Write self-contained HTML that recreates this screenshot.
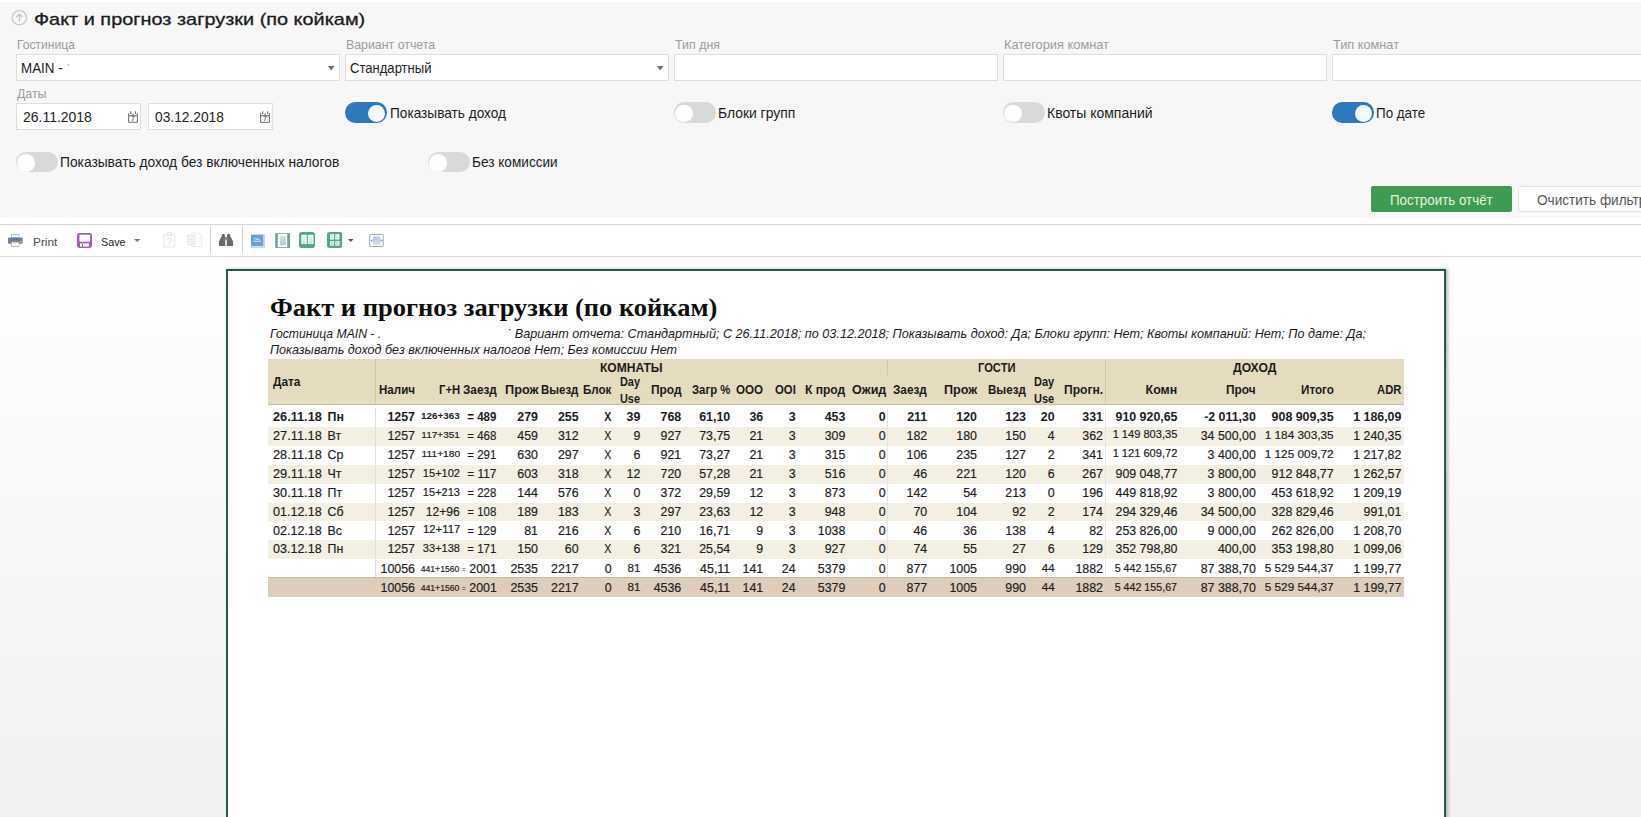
<!DOCTYPE html>
<html lang="ru"><head><meta charset="utf-8"><title>Факт и прогноз загрузки (по койкам)</title>
<style>
html,body{margin:0;padding:0;}
body{width:1641px;height:817px;overflow:hidden;background:#fff;position:relative;font-family:"Liberation Sans", "DejaVu Sans", sans-serif;color:#222;}
.b{position:absolute;display:block;}
.t{position:absolute;white-space:nowrap;line-height:1;display:inline-block;}
.sf{font-family:"Liberation Serif","DejaVu Serif",serif;}
</style></head>
<body>
<div class="b" style="left:0.00px;top:2.00px;width:1641.00px;height:216.00px;background:#f7f7f7;"></div>
<svg class="b" style="left:11px;top:9px" width="17" height="17" viewBox="0 0 17 17"><circle cx="8.4" cy="8.7" r="7.1" fill="none" stroke="#c9c9c9" stroke-width="1.3"/><path d="M8.4 12.6V5.2M5.3 8.2l3.1-3.1 3.1 3.1" fill="none" stroke="#c4c4c4" stroke-width="1.3"/></svg>
<div class="b" style="left:16.00px;top:54.00px;width:324.00px;height:27.00px;background:#fff;border:1px solid #dedede;box-sizing:border-box;"></div>
<div class="b" style="left:345.00px;top:54.00px;width:324.00px;height:27.00px;background:#fff;border:1px solid #dedede;box-sizing:border-box;"></div>
<div class="b" style="left:674.00px;top:54.00px;width:324.00px;height:27.00px;background:#fff;border:1px solid #dedede;box-sizing:border-box;"></div>
<div class="b" style="left:1003.00px;top:54.00px;width:324.00px;height:27.00px;background:#fff;border:1px solid #dedede;box-sizing:border-box;"></div>
<div class="b" style="left:1332.00px;top:54.00px;width:324.00px;height:27.00px;background:#fff;border:1px solid #dedede;box-sizing:border-box;"></div>
<svg class="b" style="left:328.3px;top:65.6px" width="7" height="5" viewBox="0 0 7 5"><path d="M0 0h6.4L3.2 4.4z" fill="#6e6e6e"/></svg>
<svg class="b" style="left:657.3px;top:65.6px" width="7" height="5" viewBox="0 0 7 5"><path d="M0 0h6.4L3.2 4.4z" fill="#6e6e6e"/></svg>
<div class="b" style="left:16.00px;top:103.00px;width:125.00px;height:27.00px;background:#fff;border:1px solid #dedede;box-sizing:border-box;"></div>
<svg class="b" style="left:128.1px;top:111px" width="10" height="12" viewBox="0 0 10 12"><path d="M.6 2.1v9.2h8.8V2.1" fill="#fff" stroke="#6e6e6e" stroke-width="1"/><path d="M.6 4.7h8.8" stroke="#6e6e6e" stroke-width="1"/><path d="M2.7.2v2.9M7.6.2v2.9" stroke="#6e6e6e" stroke-width="1.1"/><path d="M4.4 2.4h1.3v1.9H4.4z" fill="#777"/><text x="5" y="10.4" font-size="6.4" font-weight="700" text-anchor="middle" fill="#6e6e6e" font-family="Liberation Sans, DejaVu Sans, sans-serif">7</text></svg>
<div class="b" style="left:148.00px;top:103.00px;width:125.00px;height:27.00px;background:#fff;border:1px solid #dedede;box-sizing:border-box;"></div>
<svg class="b" style="left:260.1px;top:111px" width="10" height="12" viewBox="0 0 10 12"><path d="M.6 2.1v9.2h8.8V2.1" fill="#fff" stroke="#6e6e6e" stroke-width="1"/><path d="M.6 4.7h8.8" stroke="#6e6e6e" stroke-width="1"/><path d="M2.7.2v2.9M7.6.2v2.9" stroke="#6e6e6e" stroke-width="1.1"/><path d="M4.4 2.4h1.3v1.9H4.4z" fill="#777"/><text x="5" y="10.4" font-size="6.4" font-weight="700" text-anchor="middle" fill="#6e6e6e" font-family="Liberation Sans, DejaVu Sans, sans-serif">7</text></svg>
<div class="b" style="left:345.0px;top:102.2px;width:41.6px;height:20.6px;border-radius:10.3px;background:#2d78be;"></div>
<div class="b" style="left:367.6px;top:104.8px;width:17.6px;height:17.6px;border-radius:50%;background:#f6f9fc;"></div>
<div class="b" style="left:674.0px;top:102.2px;width:41.6px;height:20.4px;border-radius:10.2px;background:#d9d9d9;"></div>
<div class="b" style="left:675.3px;top:104.5px;width:17.6px;height:17.6px;border-radius:50%;background:#fdfdfd;"></div>
<div class="b" style="left:1003.0px;top:102.2px;width:41.6px;height:20.4px;border-radius:10.2px;background:#d9d9d9;"></div>
<div class="b" style="left:1004.3px;top:104.5px;width:17.6px;height:17.6px;border-radius:50%;background:#fdfdfd;"></div>
<div class="b" style="left:1332.0px;top:102.2px;width:41.6px;height:20.6px;border-radius:10.3px;background:#2d78be;"></div>
<div class="b" style="left:1354.6px;top:104.8px;width:17.6px;height:17.6px;border-radius:50%;background:#f6f9fc;"></div>
<div class="b" style="left:16.0px;top:151.7px;width:41.6px;height:20.4px;border-radius:10.2px;background:#d9d9d9;"></div>
<div class="b" style="left:17.3px;top:154.0px;width:17.6px;height:17.6px;border-radius:50%;background:#fdfdfd;"></div>
<div class="b" style="left:428.0px;top:151.7px;width:41.6px;height:20.4px;border-radius:10.2px;background:#d9d9d9;"></div>
<div class="b" style="left:429.3px;top:154.0px;width:17.6px;height:17.6px;border-radius:50%;background:#fdfdfd;"></div>
<div class="b" style="left:1371.00px;top:186.00px;width:141.00px;height:26.00px;background:#3f9a54;border-radius:2px;"></div>
<div class="b" style="left:1518.00px;top:186.00px;width:140.00px;height:26.00px;background:#fff;border:1px solid #e2e2e2;border-radius:2px;box-sizing:border-box;"></div>
<div class="b" style="left:0.00px;top:224.00px;width:1641.00px;height:1.00px;background:#d6d6d6;"></div>
<div class="b" style="left:0.00px;top:256.00px;width:1641.00px;height:1.00px;background:#dedede;"></div>
<div class="b" style="left:210.00px;top:227.00px;width:1.00px;height:26.00px;background:#d0d0d0;"></div>
<div class="b" style="left:242.00px;top:227.00px;width:1.00px;height:26.00px;background:#d0d0d0;"></div>
<!-- printer -->
<svg class="b" style="left:8px;top:234px" width="15" height="13" viewBox="0 0 15 13">
<rect x="3.4" y="0.4" width="7.6" height="3.6" fill="#fff" stroke="#a3abb4" stroke-width=".7"/>
<rect x="0" y="3.4" width="14.7" height="6.4" rx="1.1" fill="#74808d"/>
<rect x="3" y="4.3" width="8.4" height="1.5" fill="#4d7ab0"/>
<rect x="3.4" y="8.1" width="7.6" height="4.4" fill="#fff" stroke="#a0a7af" stroke-width=".7"/>
<path d="M4.8 9.8h3.6" stroke="#d2d6db" stroke-width=".8"/>
<rect x="12.2" y="7.4" width="1.6" height=".9" fill="#e8ebee"/>
</svg>
<!-- save -->
<svg class="b" style="left:77px;top:233px" width="15" height="15" viewBox="0 0 15 15">
<rect x="0" y="0.1" width="15" height="14.8" rx="2.4" fill="#9b5fb5"/>
<rect x="2.5" y="1.7" width="10.6" height="7" rx=".5" fill="#fff"/>
<rect x="3.1" y="10.4" width="8.8" height="3.3" fill="#fff"/>
<rect x="4.9" y="10.9" width="1.1" height="2.8" fill="#9b5fb5"/>
</svg>
<svg class="b" style="left:134px;top:239px" width="7" height="4" viewBox="0 0 7 4"><path d="M0 0h6.4L3.2 3z" fill="#777"/></svg>
<!-- paste (disabled) -->
<svg class="b" style="left:163px;top:232px" width="13" height="16" viewBox="0 0 13 16">
<rect x=".8" y="2.4" width="11" height="12.6" fill="#fbfbfb" stroke="#e3e6ea" stroke-width="1"/>
<rect x="4" y=".6" width="4.6" height="2.8" fill="#f2f3f5" stroke="#dfe2e6" stroke-width=".8"/>
<text x="6.4" y="12.2" font-size="8.5" text-anchor="middle" fill="#dcdfe3" font-family="Liberation Sans, sans-serif">?</text>
</svg>
<!-- copy (disabled) -->
<svg class="b" style="left:187px;top:232px" width="16" height="16" viewBox="0 0 16 16">
<path d="M4.6 1h7.2l3 3v10.6H4.6z" fill="#fcfcfc" stroke="#e4e6e9" stroke-width=".9"/>
<rect x=".8" y="3.6" width="6.6" height="8.6" fill="#fafafa" stroke="#dcdfe3" stroke-width=".9"/>
<path d="M2.2 6h3.8M2.2 7.8h3.8M2.2 9.6h3.8" stroke="#d5d8dc" stroke-width=".8"/>
</svg>
<!-- binoculars -->
<svg class="b" style="left:219px;top:233.8px" width="14" height="12" viewBox="0 0 14 12">
<path d="M3.2 0h2.3l.5 2.2.3 9.8H0V7.2L2.7 2.2z" fill="#6a6a6a"/>
<path d="M8.5 0h2.3l.5 2.2L14 7.2V12H7.7l.3-9.8z" fill="#6a6a6a"/>
<rect x="5.6" y="3" width="2.8" height="3.2" fill="#8d8d8d"/>
</svg>
<!-- icon1 blue -->
<svg class="b" style="left:250px;top:234px" width="15" height="14" viewBox="0 0 15 14">
<rect x=".3" y=".3" width="14.4" height="13.2" fill="#f2f5fa"/>
<path d="M14.4.2v13.2H.4" fill="none" stroke="#a9b1c2" stroke-width=".6"/>
<rect x="1" y=".6" width="12.4" height="11.6" fill="#6c9fd7"/>
<path d="M3.4 4.7h3v.7h3.2M3.4 7.4h7.6" fill="none" stroke="#b9d6f3" stroke-width="1.1"/>
</svg>
<!-- icon2 green frame -->
<svg class="b" style="left:275px;top:233px" width="15.4" height="15" viewBox="0 0 15.4 15">
<defs><linearGradient id="g2" x1="0" y1="0" x2="0" y2="1"><stop offset="0" stop-color="#dfe5ee"/><stop offset="1" stop-color="#b3c3d8"/></linearGradient></defs>
<rect x=".2" y=".1" width="14.9" height="14.8" fill="#6aa68f"/>
<rect x="2.8" y=".8" width="9.4" height="13.3" fill="#fff"/>
<rect x="4.8" y="2.6" width="6.2" height="9.6" fill="url(#g2)"/>
</svg>
<!-- icon3 two pages -->
<svg class="b" style="left:299px;top:232px" width="16" height="16" viewBox="0 0 16 16">
<rect x="0" y="0" width="16" height="16" rx="2.8" fill="#58a48a"/>
<rect x="2.2" y="2.8" width="5.7" height="9.2" fill="#e6f8f5"/>
<rect x="8.9" y="2.8" width="5.7" height="9.2" fill="#e6f8f5"/>
<path d="M3.6 5.4h2.8M3.6 7.2h2.8M3.6 9h2.8M10.3 5.4h2.8M10.3 7.2h2.8M10.3 9h2.8" stroke="#c2dcdc" stroke-width=".7"/>
<path d="M3.8 10.6h2.4M10.5 10.6h2.4" stroke="#8fb9b4" stroke-width=".8"/>
</svg>
<!-- icon4 four pages -->
<svg class="b" style="left:326.9px;top:232px" width="15.4" height="16" viewBox="0 0 15.4 16">
<rect x="0" y="0" width="15.4" height="16" rx="2.8" fill="#58a48a"/>
<rect x="3.1" y="2.1" width="3.9" height="5.5" fill="#e6f8f5"/>
<rect x="8.2" y="2.1" width="4.3" height="5.5" fill="#e6f8f5"/>
<rect x="3.1" y="9.1" width="3.9" height="4.6" fill="#e6f8f5"/>
<rect x="8.2" y="9.1" width="4.3" height="4.6" fill="#e6f8f5"/>
<path d="M4 3.6h2M4 5.4h2M9.3 3.6h2M9.3 5.4h2" stroke="#bcd8d6" stroke-width=".7"/>
<path d="M4 10.6h2M4 12.2h2M9.3 10.6h2M9.3 12.2h2" stroke="#8fb9b4" stroke-width=".7"/>
</svg>
<svg class="b" style="left:348.2px;top:239px" width="6" height="4" viewBox="0 0 6 4"><path d="M0 0h5.6L2.8 2.9z" fill="#555"/></svg>
<!-- icon5 full width -->
<svg class="b" style="left:369px;top:234px" width="15" height="13" viewBox="0 0 15 13">
<defs><linearGradient id="g5" x1="0" y1="0" x2="0" y2="1"><stop offset="0" stop-color="#b7c8e4"/><stop offset="1" stop-color="#d3deef"/></linearGradient></defs>
<rect x=".7" y=".5" width="13.6" height="12" rx="1.1" fill="#fff" stroke="#9c9ea3" stroke-width=".9"/>
<rect x="3.9" y="2.5" width="7.6" height="8.3" fill="url(#g5)"/>
<path d="M1.4 6.6l2-1.6v3.2zM13.8 6.6l-2-1.6v3.2z" fill="#7c9ccb"/>
</svg>

<div class="b" style="left:0.00px;top:257.00px;width:1641.00px;height:560.00px;background:linear-gradient(to bottom,#ffffff 0%,#f1f1f1 100%);"></div>
<div class="b" style="left:226.00px;top:269.00px;width:1220.00px;height:600.00px;border:2px solid #28574f;box-sizing:border-box;background:#fff;box-shadow:2px 0 3px rgba(0,0,0,.28);"></div>
<div class="b" style="left:268.00px;top:359.00px;width:1136.00px;height:45.50px;background:#e5dcc0;border-bottom:1px solid #c9c0a4;box-sizing:border-box;"></div>
<div class="b" style="left:268.00px;top:427.20px;width:1136.00px;height:18.80px;background:#f3f0e3;"></div>
<div class="b" style="left:268.00px;top:464.90px;width:1136.00px;height:18.80px;background:#f3f0e3;"></div>
<div class="b" style="left:268.00px;top:502.60px;width:1136.00px;height:18.80px;background:#f3f0e3;"></div>
<div class="b" style="left:268.00px;top:540.20px;width:1136.00px;height:18.80px;background:#f3f0e3;"></div>
<div class="b" style="left:268.00px;top:577.30px;width:1136.00px;height:19.50px;background:#decdba;border-top:1px solid #c9b8a2;box-sizing:border-box;"></div>
<div class="b" style="left:375.00px;top:359.00px;width:1.00px;height:45.00px;background:#cfc6aa;"></div>
<div class="b" style="left:375.00px;top:408.00px;width:1.00px;height:169.00px;background:#dedede;"></div>
<div class="b" style="left:887.00px;top:359.00px;width:1.00px;height:16.00px;background:#cfc6aa;"></div>
<div class="b" style="left:887.00px;top:408.00px;width:1.00px;height:169.00px;background:#e4e4e4;"></div>
<div class="b" style="left:1105.00px;top:359.00px;width:1.00px;height:45.00px;background:#cfc6aa;"></div>
<div class="b" style="left:1105.00px;top:408.00px;width:1.00px;height:169.00px;background:#e4e4e4;"></div>
<span class="t" id="t1" style="top:11.02px;font-size:17.00px;color:#1a1a1a;-webkit-text-stroke:0.30px #1a1a1a;left:33.60px;transform-origin:0 50%;transform:scaleX(1.1698);">Факт и прогноз загрузки (по койкам)</span>
<span class="t" id="t2" style="top:38.02px;font-size:13.00px;color:#9b9b9b;left:17.00px;transform-origin:0 50%;transform:scaleX(0.9320);">Гостиница</span>
<span class="t" id="t3" style="top:38.02px;font-size:13.00px;color:#9b9b9b;left:346.00px;transform-origin:0 50%;transform:scaleX(0.9500);">Вариант отчета</span>
<span class="t" id="t4" style="top:38.02px;font-size:13.00px;color:#9b9b9b;left:675.00px;transform-origin:0 50%;transform:scaleX(0.9555);">Тип дня</span>
<span class="t" id="t5" style="top:38.02px;font-size:13.00px;color:#9b9b9b;left:1004.00px;transform-origin:0 50%;transform:scaleX(0.9862);">Категория комнат</span>
<span class="t" id="t6" style="top:38.02px;font-size:13.00px;color:#9b9b9b;left:1333.00px;transform-origin:0 50%;transform:scaleX(0.9796);">Тип комнат</span>
<span class="t" id="t7" style="top:60.77px;font-size:14.50px;left:21.40px;transform-origin:0 50%;transform:scaleX(0.9222);">MAIN -</span>
<span class="t" id="t8" style="top:62.52px;font-size:8.00px;color:#666;left:67.60px;transform-origin:0 50%;">&#x27;</span>
<span class="t" id="t9" style="top:60.77px;font-size:14.50px;left:350.00px;transform-origin:0 50%;transform:scaleX(0.9009);">Стандартный</span>
<span class="t" id="t10" style="top:87.02px;font-size:13.00px;color:#9b9b9b;left:17.00px;transform-origin:0 50%;transform:scaleX(0.9502);">Даты</span>
<span class="t" id="t11" style="top:109.77px;font-size:14.50px;left:22.60px;transform-origin:0 50%;transform:scaleX(0.9636);">26.11.2018</span>
<span class="t" id="t12" style="top:109.77px;font-size:14.50px;left:154.60px;transform-origin:0 50%;transform:scaleX(0.9493);">03.12.2018</span>
<span class="t" id="t13" style="top:105.77px;font-size:14.50px;color:#1c1c1c;left:389.50px;transform-origin:0 50%;transform:scaleX(0.9408);">Показывать доход</span>
<span class="t" id="t14" style="top:105.77px;font-size:14.50px;color:#1c1c1c;left:718.30px;transform-origin:0 50%;transform:scaleX(0.9571);">Блоки групп</span>
<span class="t" id="t15" style="top:105.77px;font-size:14.50px;color:#1c1c1c;left:1047.00px;transform-origin:0 50%;transform:scaleX(0.9635);">Квоты компаний</span>
<span class="t" id="t16" style="top:105.77px;font-size:14.50px;color:#1c1c1c;left:1376.30px;transform-origin:0 50%;transform:scaleX(0.9237);">По дате</span>
<span class="t" id="t17" style="top:154.77px;font-size:14.50px;color:#1c1c1c;left:60.30px;transform-origin:0 50%;transform:scaleX(0.9499);">Показывать доход без включенных налогов</span>
<span class="t" id="t18" style="top:154.77px;font-size:14.50px;color:#1c1c1c;left:471.80px;transform-origin:0 50%;transform:scaleX(0.9389);">Без комиссии</span>
<span class="t" id="t19" style="top:192.77px;font-size:14.50px;color:#e6f6df;left:1390.00px;transform-origin:0 50%;transform:scaleX(0.9212);">Построить отчёт</span>
<span class="t" id="t20" style="top:192.77px;font-size:14.50px;color:#555;left:1536.60px;transform-origin:0 50%;transform:scaleX(0.9369);">Очистить фильтр</span>
<span class="t" id="t21" style="top:237.42px;font-size:11.20px;color:#4a4a4a;left:32.60px;transform-origin:0 50%;transform:scaleX(1.0601);">Print</span>
<span class="t" id="t22" style="top:237.42px;font-size:11.20px;left:101.00px;transform-origin:0 50%;transform:scaleX(0.9647);">Save</span>
<span class="t sf" id="t23" style="top:294.52px;font-size:26.00px;font-weight:700;color:#0c0c0c;left:270.00px;transform-origin:0 50%;transform:scaleX(1.0184);">Факт и прогноз загрузки (по койкам)</span>
<span class="t" id="t24" style="top:327.92px;font-size:12.20px;color:#1a1a1a;font-style:italic;left:270.00px;transform-origin:0 50%;">Гостиница MAIN - .</span>
<span class="t" id="t25" style="top:327.92px;font-size:12.20px;color:#1a1a1a;font-style:italic;left:507.00px;transform-origin:0 50%;transform:scaleX(1.0364);">˙ Вариант отчета: Стандартный; С 26.11.2018; по 03.12.2018; Показывать доход: Да; Блоки групп: Нет; Квоты компаний: Нет; По дате: Да;</span>
<span class="t" id="t26" style="top:343.92px;font-size:12.20px;color:#1a1a1a;font-style:italic;left:270.00px;transform-origin:0 50%;transform:scaleX(1.0322);">Показывать доход без включенных налогов Нет; Без комиссии Нет</span>
<span class="t" id="t27" style="top:375.82px;font-size:12.40px;font-weight:700;color:#1a1a1a;left:272.80px;transform-origin:0 50%;transform:scaleX(0.9551);">Дата</span>
<span class="t" id="t28" style="top:361.82px;font-size:12.40px;font-weight:700;color:#1a1a1a;left:600.30px;transform-origin:0 50%;transform:scaleX(0.9705);">КОМНАТЫ</span>
<span class="t" id="t29" style="top:361.82px;font-size:12.40px;font-weight:700;color:#1a1a1a;left:977.70px;transform-origin:0 50%;transform:scaleX(0.9009);">ГОСТИ</span>
<span class="t" id="t30" style="top:361.82px;font-size:12.40px;font-weight:700;color:#1a1a1a;left:1233.00px;transform-origin:0 50%;transform:scaleX(0.9785);">ДОХОД</span>
<span class="t" id="t31" style="top:383.82px;font-size:12.40px;font-weight:700;color:#1a1a1a;left:378.50px;transform-origin:0 50%;transform:scaleX(0.9343);">Налич</span>
<span class="t" id="t32" style="top:383.82px;font-size:12.40px;font-weight:700;color:#1a1a1a;left:439.00px;transform-origin:0 50%;transform:scaleX(0.9131);">Г+Н</span>
<span class="t" id="t33" style="top:383.82px;font-size:12.40px;font-weight:700;color:#1a1a1a;left:463.00px;transform-origin:0 50%;transform:scaleX(0.9500);">Заезд</span>
<span class="t" id="t34" style="top:383.82px;font-size:12.40px;font-weight:700;color:#1a1a1a;left:504.50px;transform-origin:0 50%;transform:scaleX(1.0253);">Прож</span>
<span class="t" id="t35" style="top:383.82px;font-size:12.40px;font-weight:700;color:#1a1a1a;left:541.00px;transform-origin:0 50%;transform:scaleX(0.9245);">Выезд</span>
<span class="t" id="t36" style="top:383.82px;font-size:12.40px;font-weight:700;color:#1a1a1a;left:583.00px;transform-origin:0 50%;transform:scaleX(0.9312);">Блок</span>
<span class="t" id="t37" style="top:375.82px;font-size:12.40px;font-weight:700;color:#1a1a1a;left:619.90px;transform-origin:0 50%;transform:scaleX(0.8797);">Day</span>
<span class="t" id="t38" style="top:392.82px;font-size:12.40px;font-weight:700;color:#1a1a1a;left:619.90px;transform-origin:0 50%;transform:scaleX(0.8797);">Use</span>
<span class="t" id="t39" style="top:383.82px;font-size:12.40px;font-weight:700;color:#1a1a1a;left:650.60px;transform-origin:0 50%;transform:scaleX(0.9606);">Прод</span>
<span class="t" id="t40" style="top:383.82px;font-size:12.40px;font-weight:700;color:#1a1a1a;left:691.70px;transform-origin:0 50%;transform:scaleX(0.9177);">Загр %</span>
<span class="t" id="t41" style="top:383.82px;font-size:12.40px;font-weight:700;color:#1a1a1a;left:736.00px;transform-origin:0 50%;transform:scaleX(0.9335);">ООО</span>
<span class="t" id="t42" style="top:383.82px;font-size:12.40px;font-weight:700;color:#1a1a1a;left:774.60px;transform-origin:0 50%;transform:scaleX(0.9155);">OOI</span>
<span class="t" id="t43" style="top:383.82px;font-size:12.40px;font-weight:700;color:#1a1a1a;left:805.00px;transform-origin:0 50%;transform:scaleX(0.9723);">К прод</span>
<span class="t" id="t44" style="top:383.82px;font-size:12.40px;font-weight:700;color:#1a1a1a;left:851.60px;transform-origin:0 50%;transform:scaleX(1.0116);">Ожид</span>
<span class="t" id="t45" style="top:383.82px;font-size:12.40px;font-weight:700;color:#1a1a1a;left:893.20px;transform-origin:0 50%;transform:scaleX(0.9500);">Заезд</span>
<span class="t" id="t46" style="top:383.82px;font-size:12.40px;font-weight:700;color:#1a1a1a;left:943.50px;transform-origin:0 50%;transform:scaleX(1.0192);">Прож</span>
<span class="t" id="t47" style="top:383.82px;font-size:12.40px;font-weight:700;color:#1a1a1a;left:988.00px;transform-origin:0 50%;transform:scaleX(0.9344);">Выезд</span>
<span class="t" id="t48" style="top:375.82px;font-size:12.40px;font-weight:700;color:#1a1a1a;left:1034.00px;transform-origin:0 50%;transform:scaleX(0.8885);">Day</span>
<span class="t" id="t49" style="top:392.82px;font-size:12.40px;font-weight:700;color:#1a1a1a;left:1034.00px;transform-origin:0 50%;transform:scaleX(0.8885);">Use</span>
<span class="t" id="t50" style="top:383.82px;font-size:12.40px;font-weight:700;color:#1a1a1a;left:1064.00px;transform-origin:0 50%;transform:scaleX(0.9766);">Прогн.</span>
<span class="t" id="t51" style="top:383.82px;font-size:12.40px;font-weight:700;color:#1a1a1a;left:1145.60px;transform-origin:0 50%;">Комн</span>
<span class="t" id="t52" style="top:383.82px;font-size:12.40px;font-weight:700;color:#1a1a1a;left:1226.00px;transform-origin:0 50%;transform:scaleX(0.9568);">Проч</span>
<span class="t" id="t53" style="top:383.82px;font-size:12.40px;font-weight:700;color:#1a1a1a;left:1300.50px;transform-origin:0 50%;transform:scaleX(0.9413);">Итого</span>
<span class="t" id="t54" style="top:383.82px;font-size:12.40px;font-weight:700;color:#1a1a1a;left:1376.80px;transform-origin:0 50%;transform:scaleX(0.9084);">ADR</span>
<span class="t" id="t55" style="top:410.82px;font-size:12.40px;font-weight:700;color:#1d1d1d;left:272.80px;transform-origin:0 50%;transform:scaleX(1.0260);">26.11.18</span>
<span class="t" id="t56" style="top:410.82px;font-size:12.40px;font-weight:700;color:#1d1d1d;left:327.60px;transform-origin:0 50%;">Пн</span>
<span class="t" id="t57" style="top:410.82px;font-size:12.40px;font-weight:700;color:#1d1d1d;right:1226.00px;transform-origin:100% 50%;">1257</span>
<span class="t" id="t58" style="top:410.72px;font-size:9.60px;font-weight:700;color:#1d1d1d;right:1181.00px;transform-origin:100% 50%;transform:scaleX(1.0259);">126+363</span>
<span class="t" id="t59" style="top:410.82px;font-size:12.40px;font-weight:700;color:#1d1d1d;right:1144.20px;transform-origin:100% 50%;transform:scaleX(0.9280);">= 489</span>
<span class="t" id="t60" style="top:410.82px;font-size:12.40px;font-weight:700;color:#1d1d1d;right:1103.00px;transform-origin:100% 50%;">279</span>
<span class="t" id="t61" style="top:410.82px;font-size:12.40px;font-weight:700;color:#1d1d1d;right:1062.40px;transform-origin:100% 50%;">255</span>
<span class="t" id="t62" style="top:410.82px;font-size:12.40px;font-weight:700;color:#1d1d1d;right:1029.40px;transform-origin:100% 50%;transform:scaleX(0.8590);">X</span>
<span class="t" id="t63" style="top:410.82px;font-size:12.40px;font-weight:700;color:#1d1d1d;right:1000.60px;transform-origin:100% 50%;">39</span>
<span class="t" id="t64" style="top:410.82px;font-size:12.40px;font-weight:700;color:#1d1d1d;right:959.80px;transform-origin:100% 50%;">768</span>
<span class="t" id="t65" style="top:410.82px;font-size:12.40px;font-weight:700;color:#1d1d1d;right:910.80px;transform-origin:100% 50%;">61,10</span>
<span class="t" id="t66" style="top:410.82px;font-size:12.40px;font-weight:700;color:#1d1d1d;right:877.80px;transform-origin:100% 50%;">36</span>
<span class="t" id="t67" style="top:410.82px;font-size:12.40px;font-weight:700;color:#1d1d1d;right:845.40px;transform-origin:100% 50%;">3</span>
<span class="t" id="t68" style="top:410.82px;font-size:12.40px;font-weight:700;color:#1d1d1d;right:795.60px;transform-origin:100% 50%;">453</span>
<span class="t" id="t69" style="top:410.82px;font-size:12.40px;font-weight:700;color:#1d1d1d;right:755.40px;transform-origin:100% 50%;">0</span>
<span class="t" id="t70" style="top:410.82px;font-size:12.40px;font-weight:700;color:#1d1d1d;right:713.80px;transform-origin:100% 50%;">211</span>
<span class="t" id="t71" style="top:410.82px;font-size:12.40px;font-weight:700;color:#1d1d1d;right:664.00px;transform-origin:100% 50%;">120</span>
<span class="t" id="t72" style="top:410.82px;font-size:12.40px;font-weight:700;color:#1d1d1d;right:615.00px;transform-origin:100% 50%;">123</span>
<span class="t" id="t73" style="top:410.82px;font-size:12.40px;font-weight:700;color:#1d1d1d;right:586.40px;transform-origin:100% 50%;">20</span>
<span class="t" id="t74" style="top:410.82px;font-size:12.40px;font-weight:700;color:#1d1d1d;right:538.00px;transform-origin:100% 50%;">331</span>
<span class="t" id="t75" style="top:410.82px;font-size:12.40px;font-weight:700;color:#1d1d1d;right:463.50px;transform-origin:100% 50%;">910 920,65</span>
<span class="t" id="t76" style="top:410.82px;font-size:12.40px;font-weight:700;color:#1d1d1d;right:385.20px;transform-origin:100% 50%;">-2 011,30</span>
<span class="t" id="t77" style="top:410.82px;font-size:12.40px;font-weight:700;color:#1d1d1d;right:307.40px;transform-origin:100% 50%;">908 909,35</span>
<span class="t" id="t78" style="top:410.82px;font-size:12.40px;font-weight:700;color:#1d1d1d;right:239.60px;transform-origin:100% 50%;">1 186,09</span>
<span class="t" id="t79" style="top:429.82px;font-size:12.40px;color:#1d1d1d;-webkit-text-stroke:0.18px #1d1d1d;left:272.80px;transform-origin:0 50%;transform:scaleX(1.0314);">27.11.18</span>
<span class="t" id="t80" style="top:429.82px;font-size:12.40px;color:#1d1d1d;-webkit-text-stroke:0.18px #1d1d1d;left:327.60px;transform-origin:0 50%;">Вт</span>
<span class="t" id="t81" style="top:429.82px;font-size:12.40px;color:#1d1d1d;-webkit-text-stroke:0.18px #1d1d1d;right:1226.00px;transform-origin:100% 50%;">1257</span>
<span class="t" id="t82" style="top:429.72px;font-size:9.60px;color:#1d1d1d;-webkit-text-stroke:0.18px #1d1d1d;right:1181.00px;transform-origin:100% 50%;transform:scaleX(1.0459);">117+351</span>
<span class="t" id="t83" style="top:429.82px;font-size:12.40px;color:#1d1d1d;-webkit-text-stroke:0.18px #1d1d1d;right:1144.20px;transform-origin:100% 50%;transform:scaleX(0.9280);">= 468</span>
<span class="t" id="t84" style="top:429.82px;font-size:12.40px;color:#1d1d1d;-webkit-text-stroke:0.18px #1d1d1d;right:1103.00px;transform-origin:100% 50%;">459</span>
<span class="t" id="t85" style="top:429.82px;font-size:12.40px;color:#1d1d1d;-webkit-text-stroke:0.18px #1d1d1d;right:1062.40px;transform-origin:100% 50%;">312</span>
<span class="t" id="t86" style="top:429.82px;font-size:12.40px;color:#1d1d1d;-webkit-text-stroke:0.18px #1d1d1d;right:1029.40px;transform-origin:100% 50%;transform:scaleX(0.8590);">X</span>
<span class="t" id="t87" style="top:429.82px;font-size:12.40px;color:#1d1d1d;-webkit-text-stroke:0.18px #1d1d1d;right:1000.60px;transform-origin:100% 50%;">9</span>
<span class="t" id="t88" style="top:429.82px;font-size:12.40px;color:#1d1d1d;-webkit-text-stroke:0.18px #1d1d1d;right:959.80px;transform-origin:100% 50%;">927</span>
<span class="t" id="t89" style="top:429.82px;font-size:12.40px;color:#1d1d1d;-webkit-text-stroke:0.18px #1d1d1d;right:910.80px;transform-origin:100% 50%;">73,75</span>
<span class="t" id="t90" style="top:429.82px;font-size:12.40px;color:#1d1d1d;-webkit-text-stroke:0.18px #1d1d1d;right:877.80px;transform-origin:100% 50%;">21</span>
<span class="t" id="t91" style="top:429.82px;font-size:12.40px;color:#1d1d1d;-webkit-text-stroke:0.18px #1d1d1d;right:845.40px;transform-origin:100% 50%;">3</span>
<span class="t" id="t92" style="top:429.82px;font-size:12.40px;color:#1d1d1d;-webkit-text-stroke:0.18px #1d1d1d;right:795.60px;transform-origin:100% 50%;">309</span>
<span class="t" id="t93" style="top:429.82px;font-size:12.40px;color:#1d1d1d;-webkit-text-stroke:0.18px #1d1d1d;right:755.40px;transform-origin:100% 50%;">0</span>
<span class="t" id="t94" style="top:429.82px;font-size:12.40px;color:#1d1d1d;-webkit-text-stroke:0.18px #1d1d1d;right:713.80px;transform-origin:100% 50%;">182</span>
<span class="t" id="t95" style="top:429.82px;font-size:12.40px;color:#1d1d1d;-webkit-text-stroke:0.18px #1d1d1d;right:664.00px;transform-origin:100% 50%;">180</span>
<span class="t" id="t96" style="top:429.82px;font-size:12.40px;color:#1d1d1d;-webkit-text-stroke:0.18px #1d1d1d;right:615.00px;transform-origin:100% 50%;">150</span>
<span class="t" id="t97" style="top:429.82px;font-size:12.40px;color:#1d1d1d;-webkit-text-stroke:0.18px #1d1d1d;right:586.40px;transform-origin:100% 50%;">4</span>
<span class="t" id="t98" style="top:429.82px;font-size:12.40px;color:#1d1d1d;-webkit-text-stroke:0.18px #1d1d1d;right:538.00px;transform-origin:100% 50%;">362</span>
<span class="t" id="t99" style="top:429.42px;font-size:11.20px;color:#1d1d1d;-webkit-text-stroke:0.18px #1d1d1d;right:463.50px;transform-origin:100% 50%;transform:scaleX(0.9904);">1 149 803,35</span>
<span class="t" id="t100" style="top:429.82px;font-size:12.40px;color:#1d1d1d;-webkit-text-stroke:0.18px #1d1d1d;right:385.20px;transform-origin:100% 50%;">34 500,00</span>
<span class="t" id="t101" style="top:430.12px;font-size:11.80px;color:#1d1d1d;-webkit-text-stroke:0.18px #1d1d1d;right:307.40px;transform-origin:100% 50%;">1 184 303,35</span>
<span class="t" id="t102" style="top:429.82px;font-size:12.40px;color:#1d1d1d;-webkit-text-stroke:0.18px #1d1d1d;right:239.60px;transform-origin:100% 50%;">1 240,35</span>
<span class="t" id="t103" style="top:448.82px;font-size:12.40px;color:#1d1d1d;-webkit-text-stroke:0.18px #1d1d1d;left:272.80px;transform-origin:0 50%;transform:scaleX(1.0314);">28.11.18</span>
<span class="t" id="t104" style="top:448.82px;font-size:12.40px;color:#1d1d1d;-webkit-text-stroke:0.18px #1d1d1d;left:327.60px;transform-origin:0 50%;">Ср</span>
<span class="t" id="t105" style="top:448.82px;font-size:12.40px;color:#1d1d1d;-webkit-text-stroke:0.18px #1d1d1d;right:1226.00px;transform-origin:100% 50%;">1257</span>
<span class="t" id="t106" style="top:448.72px;font-size:9.60px;color:#1d1d1d;-webkit-text-stroke:0.18px #1d1d1d;right:1181.00px;transform-origin:100% 50%;transform:scaleX(1.0662);">111+180</span>
<span class="t" id="t107" style="top:448.82px;font-size:12.40px;color:#1d1d1d;-webkit-text-stroke:0.18px #1d1d1d;right:1144.20px;transform-origin:100% 50%;transform:scaleX(0.9280);">= 291</span>
<span class="t" id="t108" style="top:448.82px;font-size:12.40px;color:#1d1d1d;-webkit-text-stroke:0.18px #1d1d1d;right:1103.00px;transform-origin:100% 50%;">630</span>
<span class="t" id="t109" style="top:448.82px;font-size:12.40px;color:#1d1d1d;-webkit-text-stroke:0.18px #1d1d1d;right:1062.40px;transform-origin:100% 50%;">297</span>
<span class="t" id="t110" style="top:448.82px;font-size:12.40px;color:#1d1d1d;-webkit-text-stroke:0.18px #1d1d1d;right:1029.40px;transform-origin:100% 50%;transform:scaleX(0.8590);">X</span>
<span class="t" id="t111" style="top:448.82px;font-size:12.40px;color:#1d1d1d;-webkit-text-stroke:0.18px #1d1d1d;right:1000.60px;transform-origin:100% 50%;">6</span>
<span class="t" id="t112" style="top:448.82px;font-size:12.40px;color:#1d1d1d;-webkit-text-stroke:0.18px #1d1d1d;right:959.80px;transform-origin:100% 50%;">921</span>
<span class="t" id="t113" style="top:448.82px;font-size:12.40px;color:#1d1d1d;-webkit-text-stroke:0.18px #1d1d1d;right:910.80px;transform-origin:100% 50%;">73,27</span>
<span class="t" id="t114" style="top:448.82px;font-size:12.40px;color:#1d1d1d;-webkit-text-stroke:0.18px #1d1d1d;right:877.80px;transform-origin:100% 50%;">21</span>
<span class="t" id="t115" style="top:448.82px;font-size:12.40px;color:#1d1d1d;-webkit-text-stroke:0.18px #1d1d1d;right:845.40px;transform-origin:100% 50%;">3</span>
<span class="t" id="t116" style="top:448.82px;font-size:12.40px;color:#1d1d1d;-webkit-text-stroke:0.18px #1d1d1d;right:795.60px;transform-origin:100% 50%;">315</span>
<span class="t" id="t117" style="top:448.82px;font-size:12.40px;color:#1d1d1d;-webkit-text-stroke:0.18px #1d1d1d;right:755.40px;transform-origin:100% 50%;">0</span>
<span class="t" id="t118" style="top:448.82px;font-size:12.40px;color:#1d1d1d;-webkit-text-stroke:0.18px #1d1d1d;right:713.80px;transform-origin:100% 50%;">106</span>
<span class="t" id="t119" style="top:448.82px;font-size:12.40px;color:#1d1d1d;-webkit-text-stroke:0.18px #1d1d1d;right:664.00px;transform-origin:100% 50%;">235</span>
<span class="t" id="t120" style="top:448.82px;font-size:12.40px;color:#1d1d1d;-webkit-text-stroke:0.18px #1d1d1d;right:615.00px;transform-origin:100% 50%;">127</span>
<span class="t" id="t121" style="top:448.82px;font-size:12.40px;color:#1d1d1d;-webkit-text-stroke:0.18px #1d1d1d;right:586.40px;transform-origin:100% 50%;">2</span>
<span class="t" id="t122" style="top:448.82px;font-size:12.40px;color:#1d1d1d;-webkit-text-stroke:0.18px #1d1d1d;right:538.00px;transform-origin:100% 50%;">341</span>
<span class="t" id="t123" style="top:448.42px;font-size:11.20px;color:#1d1d1d;-webkit-text-stroke:0.18px #1d1d1d;right:463.50px;transform-origin:100% 50%;transform:scaleX(0.9904);">1 121 609,72</span>
<span class="t" id="t124" style="top:448.82px;font-size:12.40px;color:#1d1d1d;-webkit-text-stroke:0.18px #1d1d1d;right:385.20px;transform-origin:100% 50%;">3 400,00</span>
<span class="t" id="t125" style="top:449.12px;font-size:11.80px;color:#1d1d1d;-webkit-text-stroke:0.18px #1d1d1d;right:307.40px;transform-origin:100% 50%;">1 125 009,72</span>
<span class="t" id="t126" style="top:448.82px;font-size:12.40px;color:#1d1d1d;-webkit-text-stroke:0.18px #1d1d1d;right:239.60px;transform-origin:100% 50%;">1 217,82</span>
<span class="t" id="t127" style="top:467.82px;font-size:12.40px;color:#1d1d1d;-webkit-text-stroke:0.18px #1d1d1d;left:272.80px;transform-origin:0 50%;transform:scaleX(1.0314);">29.11.18</span>
<span class="t" id="t128" style="top:467.82px;font-size:12.40px;color:#1d1d1d;-webkit-text-stroke:0.18px #1d1d1d;left:327.60px;transform-origin:0 50%;">Чт</span>
<span class="t" id="t129" style="top:467.82px;font-size:12.40px;color:#1d1d1d;-webkit-text-stroke:0.18px #1d1d1d;right:1226.00px;transform-origin:100% 50%;">1257</span>
<span class="t" id="t130" style="top:467.67px;font-size:10.70px;color:#1d1d1d;-webkit-text-stroke:0.18px #1d1d1d;right:1181.00px;transform-origin:100% 50%;transform:scaleX(1.0315);">15+102</span>
<span class="t" id="t131" style="top:467.82px;font-size:12.40px;color:#1d1d1d;-webkit-text-stroke:0.18px #1d1d1d;right:1144.20px;transform-origin:100% 50%;transform:scaleX(0.9561);">= 117</span>
<span class="t" id="t132" style="top:467.82px;font-size:12.40px;color:#1d1d1d;-webkit-text-stroke:0.18px #1d1d1d;right:1103.00px;transform-origin:100% 50%;">603</span>
<span class="t" id="t133" style="top:467.82px;font-size:12.40px;color:#1d1d1d;-webkit-text-stroke:0.18px #1d1d1d;right:1062.40px;transform-origin:100% 50%;">318</span>
<span class="t" id="t134" style="top:467.82px;font-size:12.40px;color:#1d1d1d;-webkit-text-stroke:0.18px #1d1d1d;right:1029.40px;transform-origin:100% 50%;transform:scaleX(0.8590);">X</span>
<span class="t" id="t135" style="top:467.82px;font-size:12.40px;color:#1d1d1d;-webkit-text-stroke:0.18px #1d1d1d;right:1000.60px;transform-origin:100% 50%;">12</span>
<span class="t" id="t136" style="top:467.82px;font-size:12.40px;color:#1d1d1d;-webkit-text-stroke:0.18px #1d1d1d;right:959.80px;transform-origin:100% 50%;">720</span>
<span class="t" id="t137" style="top:467.82px;font-size:12.40px;color:#1d1d1d;-webkit-text-stroke:0.18px #1d1d1d;right:910.80px;transform-origin:100% 50%;">57,28</span>
<span class="t" id="t138" style="top:467.82px;font-size:12.40px;color:#1d1d1d;-webkit-text-stroke:0.18px #1d1d1d;right:877.80px;transform-origin:100% 50%;">21</span>
<span class="t" id="t139" style="top:467.82px;font-size:12.40px;color:#1d1d1d;-webkit-text-stroke:0.18px #1d1d1d;right:845.40px;transform-origin:100% 50%;">3</span>
<span class="t" id="t140" style="top:467.82px;font-size:12.40px;color:#1d1d1d;-webkit-text-stroke:0.18px #1d1d1d;right:795.60px;transform-origin:100% 50%;">516</span>
<span class="t" id="t141" style="top:467.82px;font-size:12.40px;color:#1d1d1d;-webkit-text-stroke:0.18px #1d1d1d;right:755.40px;transform-origin:100% 50%;">0</span>
<span class="t" id="t142" style="top:467.82px;font-size:12.40px;color:#1d1d1d;-webkit-text-stroke:0.18px #1d1d1d;right:713.80px;transform-origin:100% 50%;">46</span>
<span class="t" id="t143" style="top:467.82px;font-size:12.40px;color:#1d1d1d;-webkit-text-stroke:0.18px #1d1d1d;right:664.00px;transform-origin:100% 50%;">221</span>
<span class="t" id="t144" style="top:467.82px;font-size:12.40px;color:#1d1d1d;-webkit-text-stroke:0.18px #1d1d1d;right:615.00px;transform-origin:100% 50%;">120</span>
<span class="t" id="t145" style="top:467.82px;font-size:12.40px;color:#1d1d1d;-webkit-text-stroke:0.18px #1d1d1d;right:586.40px;transform-origin:100% 50%;">6</span>
<span class="t" id="t146" style="top:467.82px;font-size:12.40px;color:#1d1d1d;-webkit-text-stroke:0.18px #1d1d1d;right:538.00px;transform-origin:100% 50%;">267</span>
<span class="t" id="t147" style="top:467.82px;font-size:12.40px;color:#1d1d1d;-webkit-text-stroke:0.18px #1d1d1d;right:463.50px;transform-origin:100% 50%;">909 048,77</span>
<span class="t" id="t148" style="top:467.82px;font-size:12.40px;color:#1d1d1d;-webkit-text-stroke:0.18px #1d1d1d;right:385.20px;transform-origin:100% 50%;">3 800,00</span>
<span class="t" id="t149" style="top:467.82px;font-size:12.40px;color:#1d1d1d;-webkit-text-stroke:0.18px #1d1d1d;right:307.40px;transform-origin:100% 50%;">912 848,77</span>
<span class="t" id="t150" style="top:467.82px;font-size:12.40px;color:#1d1d1d;-webkit-text-stroke:0.18px #1d1d1d;right:239.60px;transform-origin:100% 50%;">1 262,57</span>
<span class="t" id="t151" style="top:486.82px;font-size:12.40px;color:#1d1d1d;-webkit-text-stroke:0.18px #1d1d1d;left:272.80px;transform-origin:0 50%;transform:scaleX(1.0314);">30.11.18</span>
<span class="t" id="t152" style="top:486.82px;font-size:12.40px;color:#1d1d1d;-webkit-text-stroke:0.18px #1d1d1d;left:327.60px;transform-origin:0 50%;">Пт</span>
<span class="t" id="t153" style="top:486.82px;font-size:12.40px;color:#1d1d1d;-webkit-text-stroke:0.18px #1d1d1d;right:1226.00px;transform-origin:100% 50%;">1257</span>
<span class="t" id="t154" style="top:486.67px;font-size:10.70px;color:#1d1d1d;-webkit-text-stroke:0.18px #1d1d1d;right:1181.00px;transform-origin:100% 50%;transform:scaleX(1.0315);">15+213</span>
<span class="t" id="t155" style="top:486.82px;font-size:12.40px;color:#1d1d1d;-webkit-text-stroke:0.18px #1d1d1d;right:1144.20px;transform-origin:100% 50%;transform:scaleX(0.9280);">= 228</span>
<span class="t" id="t156" style="top:486.82px;font-size:12.40px;color:#1d1d1d;-webkit-text-stroke:0.18px #1d1d1d;right:1103.00px;transform-origin:100% 50%;">144</span>
<span class="t" id="t157" style="top:486.82px;font-size:12.40px;color:#1d1d1d;-webkit-text-stroke:0.18px #1d1d1d;right:1062.40px;transform-origin:100% 50%;">576</span>
<span class="t" id="t158" style="top:486.82px;font-size:12.40px;color:#1d1d1d;-webkit-text-stroke:0.18px #1d1d1d;right:1029.40px;transform-origin:100% 50%;transform:scaleX(0.8590);">X</span>
<span class="t" id="t159" style="top:486.82px;font-size:12.40px;color:#1d1d1d;-webkit-text-stroke:0.18px #1d1d1d;right:1000.60px;transform-origin:100% 50%;">0</span>
<span class="t" id="t160" style="top:486.82px;font-size:12.40px;color:#1d1d1d;-webkit-text-stroke:0.18px #1d1d1d;right:959.80px;transform-origin:100% 50%;">372</span>
<span class="t" id="t161" style="top:486.82px;font-size:12.40px;color:#1d1d1d;-webkit-text-stroke:0.18px #1d1d1d;right:910.80px;transform-origin:100% 50%;">29,59</span>
<span class="t" id="t162" style="top:486.82px;font-size:12.40px;color:#1d1d1d;-webkit-text-stroke:0.18px #1d1d1d;right:877.80px;transform-origin:100% 50%;">12</span>
<span class="t" id="t163" style="top:486.82px;font-size:12.40px;color:#1d1d1d;-webkit-text-stroke:0.18px #1d1d1d;right:845.40px;transform-origin:100% 50%;">3</span>
<span class="t" id="t164" style="top:486.82px;font-size:12.40px;color:#1d1d1d;-webkit-text-stroke:0.18px #1d1d1d;right:795.60px;transform-origin:100% 50%;">873</span>
<span class="t" id="t165" style="top:486.82px;font-size:12.40px;color:#1d1d1d;-webkit-text-stroke:0.18px #1d1d1d;right:755.40px;transform-origin:100% 50%;">0</span>
<span class="t" id="t166" style="top:486.82px;font-size:12.40px;color:#1d1d1d;-webkit-text-stroke:0.18px #1d1d1d;right:713.80px;transform-origin:100% 50%;">142</span>
<span class="t" id="t167" style="top:486.82px;font-size:12.40px;color:#1d1d1d;-webkit-text-stroke:0.18px #1d1d1d;right:664.00px;transform-origin:100% 50%;">54</span>
<span class="t" id="t168" style="top:486.82px;font-size:12.40px;color:#1d1d1d;-webkit-text-stroke:0.18px #1d1d1d;right:615.00px;transform-origin:100% 50%;">213</span>
<span class="t" id="t169" style="top:486.82px;font-size:12.40px;color:#1d1d1d;-webkit-text-stroke:0.18px #1d1d1d;right:586.40px;transform-origin:100% 50%;">0</span>
<span class="t" id="t170" style="top:486.82px;font-size:12.40px;color:#1d1d1d;-webkit-text-stroke:0.18px #1d1d1d;right:538.00px;transform-origin:100% 50%;">196</span>
<span class="t" id="t171" style="top:486.82px;font-size:12.40px;color:#1d1d1d;-webkit-text-stroke:0.18px #1d1d1d;right:463.50px;transform-origin:100% 50%;">449 818,92</span>
<span class="t" id="t172" style="top:486.82px;font-size:12.40px;color:#1d1d1d;-webkit-text-stroke:0.18px #1d1d1d;right:385.20px;transform-origin:100% 50%;">3 800,00</span>
<span class="t" id="t173" style="top:486.82px;font-size:12.40px;color:#1d1d1d;-webkit-text-stroke:0.18px #1d1d1d;right:307.40px;transform-origin:100% 50%;">453 618,92</span>
<span class="t" id="t174" style="top:486.82px;font-size:12.40px;color:#1d1d1d;-webkit-text-stroke:0.18px #1d1d1d;right:239.60px;transform-origin:100% 50%;">1 209,19</span>
<span class="t" id="t175" style="top:505.82px;font-size:12.40px;color:#1d1d1d;-webkit-text-stroke:0.18px #1d1d1d;left:272.80px;transform-origin:0 50%;transform:scaleX(1.0117);">01.12.18</span>
<span class="t" id="t176" style="top:505.82px;font-size:12.40px;color:#1d1d1d;-webkit-text-stroke:0.18px #1d1d1d;left:327.60px;transform-origin:0 50%;">Сб</span>
<span class="t" id="t177" style="top:505.82px;font-size:12.40px;color:#1d1d1d;-webkit-text-stroke:0.18px #1d1d1d;right:1226.00px;transform-origin:100% 50%;">1257</span>
<span class="t" id="t178" style="top:505.82px;font-size:12.40px;color:#1d1d1d;-webkit-text-stroke:0.18px #1d1d1d;right:1181.00px;transform-origin:100% 50%;transform:scaleX(0.9795);">12+96</span>
<span class="t" id="t179" style="top:505.82px;font-size:12.40px;color:#1d1d1d;-webkit-text-stroke:0.18px #1d1d1d;right:1144.20px;transform-origin:100% 50%;transform:scaleX(0.9280);">= 108</span>
<span class="t" id="t180" style="top:505.82px;font-size:12.40px;color:#1d1d1d;-webkit-text-stroke:0.18px #1d1d1d;right:1103.00px;transform-origin:100% 50%;">189</span>
<span class="t" id="t181" style="top:505.82px;font-size:12.40px;color:#1d1d1d;-webkit-text-stroke:0.18px #1d1d1d;right:1062.40px;transform-origin:100% 50%;">183</span>
<span class="t" id="t182" style="top:505.82px;font-size:12.40px;color:#1d1d1d;-webkit-text-stroke:0.18px #1d1d1d;right:1029.40px;transform-origin:100% 50%;transform:scaleX(0.8590);">X</span>
<span class="t" id="t183" style="top:505.82px;font-size:12.40px;color:#1d1d1d;-webkit-text-stroke:0.18px #1d1d1d;right:1000.60px;transform-origin:100% 50%;">3</span>
<span class="t" id="t184" style="top:505.82px;font-size:12.40px;color:#1d1d1d;-webkit-text-stroke:0.18px #1d1d1d;right:959.80px;transform-origin:100% 50%;">297</span>
<span class="t" id="t185" style="top:505.82px;font-size:12.40px;color:#1d1d1d;-webkit-text-stroke:0.18px #1d1d1d;right:910.80px;transform-origin:100% 50%;">23,63</span>
<span class="t" id="t186" style="top:505.82px;font-size:12.40px;color:#1d1d1d;-webkit-text-stroke:0.18px #1d1d1d;right:877.80px;transform-origin:100% 50%;">12</span>
<span class="t" id="t187" style="top:505.82px;font-size:12.40px;color:#1d1d1d;-webkit-text-stroke:0.18px #1d1d1d;right:845.40px;transform-origin:100% 50%;">3</span>
<span class="t" id="t188" style="top:505.82px;font-size:12.40px;color:#1d1d1d;-webkit-text-stroke:0.18px #1d1d1d;right:795.60px;transform-origin:100% 50%;">948</span>
<span class="t" id="t189" style="top:505.82px;font-size:12.40px;color:#1d1d1d;-webkit-text-stroke:0.18px #1d1d1d;right:755.40px;transform-origin:100% 50%;">0</span>
<span class="t" id="t190" style="top:505.82px;font-size:12.40px;color:#1d1d1d;-webkit-text-stroke:0.18px #1d1d1d;right:713.80px;transform-origin:100% 50%;">70</span>
<span class="t" id="t191" style="top:505.82px;font-size:12.40px;color:#1d1d1d;-webkit-text-stroke:0.18px #1d1d1d;right:664.00px;transform-origin:100% 50%;">104</span>
<span class="t" id="t192" style="top:505.82px;font-size:12.40px;color:#1d1d1d;-webkit-text-stroke:0.18px #1d1d1d;right:615.00px;transform-origin:100% 50%;">92</span>
<span class="t" id="t193" style="top:505.82px;font-size:12.40px;color:#1d1d1d;-webkit-text-stroke:0.18px #1d1d1d;right:586.40px;transform-origin:100% 50%;">2</span>
<span class="t" id="t194" style="top:505.82px;font-size:12.40px;color:#1d1d1d;-webkit-text-stroke:0.18px #1d1d1d;right:538.00px;transform-origin:100% 50%;">174</span>
<span class="t" id="t195" style="top:505.82px;font-size:12.40px;color:#1d1d1d;-webkit-text-stroke:0.18px #1d1d1d;right:463.50px;transform-origin:100% 50%;">294 329,46</span>
<span class="t" id="t196" style="top:505.82px;font-size:12.40px;color:#1d1d1d;-webkit-text-stroke:0.18px #1d1d1d;right:385.20px;transform-origin:100% 50%;">34 500,00</span>
<span class="t" id="t197" style="top:505.82px;font-size:12.40px;color:#1d1d1d;-webkit-text-stroke:0.18px #1d1d1d;right:307.40px;transform-origin:100% 50%;">328 829,46</span>
<span class="t" id="t198" style="top:505.82px;font-size:12.40px;color:#1d1d1d;-webkit-text-stroke:0.18px #1d1d1d;right:239.60px;transform-origin:100% 50%;">991,01</span>
<span class="t" id="t199" style="top:524.82px;font-size:12.40px;color:#1d1d1d;-webkit-text-stroke:0.18px #1d1d1d;left:272.80px;transform-origin:0 50%;transform:scaleX(1.0117);">02.12.18</span>
<span class="t" id="t200" style="top:524.82px;font-size:12.40px;color:#1d1d1d;-webkit-text-stroke:0.18px #1d1d1d;left:327.60px;transform-origin:0 50%;">Вс</span>
<span class="t" id="t201" style="top:524.82px;font-size:12.40px;color:#1d1d1d;-webkit-text-stroke:0.18px #1d1d1d;right:1226.00px;transform-origin:100% 50%;">1257</span>
<span class="t" id="t202" style="top:523.67px;font-size:10.70px;color:#1d1d1d;-webkit-text-stroke:0.18px #1d1d1d;right:1181.00px;transform-origin:100% 50%;transform:scaleX(1.0548);">12+117</span>
<span class="t" id="t203" style="top:524.82px;font-size:12.40px;color:#1d1d1d;-webkit-text-stroke:0.18px #1d1d1d;right:1144.20px;transform-origin:100% 50%;transform:scaleX(0.9280);">= 129</span>
<span class="t" id="t204" style="top:524.82px;font-size:12.40px;color:#1d1d1d;-webkit-text-stroke:0.18px #1d1d1d;right:1103.00px;transform-origin:100% 50%;">81</span>
<span class="t" id="t205" style="top:524.82px;font-size:12.40px;color:#1d1d1d;-webkit-text-stroke:0.18px #1d1d1d;right:1062.40px;transform-origin:100% 50%;">216</span>
<span class="t" id="t206" style="top:524.82px;font-size:12.40px;color:#1d1d1d;-webkit-text-stroke:0.18px #1d1d1d;right:1029.40px;transform-origin:100% 50%;transform:scaleX(0.8590);">X</span>
<span class="t" id="t207" style="top:524.82px;font-size:12.40px;color:#1d1d1d;-webkit-text-stroke:0.18px #1d1d1d;right:1000.60px;transform-origin:100% 50%;">6</span>
<span class="t" id="t208" style="top:524.82px;font-size:12.40px;color:#1d1d1d;-webkit-text-stroke:0.18px #1d1d1d;right:959.80px;transform-origin:100% 50%;">210</span>
<span class="t" id="t209" style="top:524.82px;font-size:12.40px;color:#1d1d1d;-webkit-text-stroke:0.18px #1d1d1d;right:910.80px;transform-origin:100% 50%;">16,71</span>
<span class="t" id="t210" style="top:524.82px;font-size:12.40px;color:#1d1d1d;-webkit-text-stroke:0.18px #1d1d1d;right:877.80px;transform-origin:100% 50%;">9</span>
<span class="t" id="t211" style="top:524.82px;font-size:12.40px;color:#1d1d1d;-webkit-text-stroke:0.18px #1d1d1d;right:845.40px;transform-origin:100% 50%;">3</span>
<span class="t" id="t212" style="top:524.82px;font-size:12.40px;color:#1d1d1d;-webkit-text-stroke:0.18px #1d1d1d;right:795.60px;transform-origin:100% 50%;">1038</span>
<span class="t" id="t213" style="top:524.82px;font-size:12.40px;color:#1d1d1d;-webkit-text-stroke:0.18px #1d1d1d;right:755.40px;transform-origin:100% 50%;">0</span>
<span class="t" id="t214" style="top:524.82px;font-size:12.40px;color:#1d1d1d;-webkit-text-stroke:0.18px #1d1d1d;right:713.80px;transform-origin:100% 50%;">46</span>
<span class="t" id="t215" style="top:524.82px;font-size:12.40px;color:#1d1d1d;-webkit-text-stroke:0.18px #1d1d1d;right:664.00px;transform-origin:100% 50%;">36</span>
<span class="t" id="t216" style="top:524.82px;font-size:12.40px;color:#1d1d1d;-webkit-text-stroke:0.18px #1d1d1d;right:615.00px;transform-origin:100% 50%;">138</span>
<span class="t" id="t217" style="top:524.82px;font-size:12.40px;color:#1d1d1d;-webkit-text-stroke:0.18px #1d1d1d;right:586.40px;transform-origin:100% 50%;">4</span>
<span class="t" id="t218" style="top:524.82px;font-size:12.40px;color:#1d1d1d;-webkit-text-stroke:0.18px #1d1d1d;right:538.00px;transform-origin:100% 50%;">82</span>
<span class="t" id="t219" style="top:524.82px;font-size:12.40px;color:#1d1d1d;-webkit-text-stroke:0.18px #1d1d1d;right:463.50px;transform-origin:100% 50%;">253 826,00</span>
<span class="t" id="t220" style="top:524.82px;font-size:12.40px;color:#1d1d1d;-webkit-text-stroke:0.18px #1d1d1d;right:385.20px;transform-origin:100% 50%;">9 000,00</span>
<span class="t" id="t221" style="top:524.82px;font-size:12.40px;color:#1d1d1d;-webkit-text-stroke:0.18px #1d1d1d;right:307.40px;transform-origin:100% 50%;">262 826,00</span>
<span class="t" id="t222" style="top:524.82px;font-size:12.40px;color:#1d1d1d;-webkit-text-stroke:0.18px #1d1d1d;right:239.60px;transform-origin:100% 50%;">1 208,70</span>
<span class="t" id="t223" style="top:542.82px;font-size:12.40px;color:#1d1d1d;-webkit-text-stroke:0.18px #1d1d1d;left:272.80px;transform-origin:0 50%;transform:scaleX(1.0117);">03.12.18</span>
<span class="t" id="t224" style="top:542.82px;font-size:12.40px;color:#1d1d1d;-webkit-text-stroke:0.18px #1d1d1d;left:327.60px;transform-origin:0 50%;">Пн</span>
<span class="t" id="t225" style="top:542.82px;font-size:12.40px;color:#1d1d1d;-webkit-text-stroke:0.18px #1d1d1d;right:1226.00px;transform-origin:100% 50%;">1257</span>
<span class="t" id="t226" style="top:542.67px;font-size:10.70px;color:#1d1d1d;-webkit-text-stroke:0.18px #1d1d1d;right:1181.00px;transform-origin:100% 50%;transform:scaleX(1.0315);">33+138</span>
<span class="t" id="t227" style="top:542.82px;font-size:12.40px;color:#1d1d1d;-webkit-text-stroke:0.18px #1d1d1d;right:1144.20px;transform-origin:100% 50%;transform:scaleX(0.9280);">= 171</span>
<span class="t" id="t228" style="top:542.82px;font-size:12.40px;color:#1d1d1d;-webkit-text-stroke:0.18px #1d1d1d;right:1103.00px;transform-origin:100% 50%;">150</span>
<span class="t" id="t229" style="top:542.82px;font-size:12.40px;color:#1d1d1d;-webkit-text-stroke:0.18px #1d1d1d;right:1062.40px;transform-origin:100% 50%;">60</span>
<span class="t" id="t230" style="top:542.82px;font-size:12.40px;color:#1d1d1d;-webkit-text-stroke:0.18px #1d1d1d;right:1029.40px;transform-origin:100% 50%;transform:scaleX(0.8590);">X</span>
<span class="t" id="t231" style="top:542.82px;font-size:12.40px;color:#1d1d1d;-webkit-text-stroke:0.18px #1d1d1d;right:1000.60px;transform-origin:100% 50%;">6</span>
<span class="t" id="t232" style="top:542.82px;font-size:12.40px;color:#1d1d1d;-webkit-text-stroke:0.18px #1d1d1d;right:959.80px;transform-origin:100% 50%;">321</span>
<span class="t" id="t233" style="top:542.82px;font-size:12.40px;color:#1d1d1d;-webkit-text-stroke:0.18px #1d1d1d;right:910.80px;transform-origin:100% 50%;">25,54</span>
<span class="t" id="t234" style="top:542.82px;font-size:12.40px;color:#1d1d1d;-webkit-text-stroke:0.18px #1d1d1d;right:877.80px;transform-origin:100% 50%;">9</span>
<span class="t" id="t235" style="top:542.82px;font-size:12.40px;color:#1d1d1d;-webkit-text-stroke:0.18px #1d1d1d;right:845.40px;transform-origin:100% 50%;">3</span>
<span class="t" id="t236" style="top:542.82px;font-size:12.40px;color:#1d1d1d;-webkit-text-stroke:0.18px #1d1d1d;right:795.60px;transform-origin:100% 50%;">927</span>
<span class="t" id="t237" style="top:542.82px;font-size:12.40px;color:#1d1d1d;-webkit-text-stroke:0.18px #1d1d1d;right:755.40px;transform-origin:100% 50%;">0</span>
<span class="t" id="t238" style="top:542.82px;font-size:12.40px;color:#1d1d1d;-webkit-text-stroke:0.18px #1d1d1d;right:713.80px;transform-origin:100% 50%;">74</span>
<span class="t" id="t239" style="top:542.82px;font-size:12.40px;color:#1d1d1d;-webkit-text-stroke:0.18px #1d1d1d;right:664.00px;transform-origin:100% 50%;">55</span>
<span class="t" id="t240" style="top:542.82px;font-size:12.40px;color:#1d1d1d;-webkit-text-stroke:0.18px #1d1d1d;right:615.00px;transform-origin:100% 50%;">27</span>
<span class="t" id="t241" style="top:542.82px;font-size:12.40px;color:#1d1d1d;-webkit-text-stroke:0.18px #1d1d1d;right:586.40px;transform-origin:100% 50%;">6</span>
<span class="t" id="t242" style="top:542.82px;font-size:12.40px;color:#1d1d1d;-webkit-text-stroke:0.18px #1d1d1d;right:538.00px;transform-origin:100% 50%;">129</span>
<span class="t" id="t243" style="top:542.82px;font-size:12.40px;color:#1d1d1d;-webkit-text-stroke:0.18px #1d1d1d;right:463.50px;transform-origin:100% 50%;">352 798,80</span>
<span class="t" id="t244" style="top:542.82px;font-size:12.40px;color:#1d1d1d;-webkit-text-stroke:0.18px #1d1d1d;right:385.20px;transform-origin:100% 50%;">400,00</span>
<span class="t" id="t245" style="top:542.82px;font-size:12.40px;color:#1d1d1d;-webkit-text-stroke:0.18px #1d1d1d;right:307.40px;transform-origin:100% 50%;">353 198,80</span>
<span class="t" id="t246" style="top:542.82px;font-size:12.40px;color:#1d1d1d;-webkit-text-stroke:0.18px #1d1d1d;right:239.60px;transform-origin:100% 50%;">1 099,06</span>
<span class="t" id="t247" style="top:562.82px;font-size:12.40px;color:#1d1d1d;-webkit-text-stroke:0.18px #1d1d1d;right:1226.00px;transform-origin:100% 50%;">10056</span>
<span class="t" id="t248" style="top:564.62px;font-size:8.80px;color:#1d1d1d;left:461.70px;transform-origin:0 50%;transform:scaleX(0.7003);">=</span>
<span class="t" id="t249" style="top:564.62px;font-size:8.80px;color:#1d1d1d;-webkit-text-stroke:0.18px #1d1d1d;right:1181.40px;transform-origin:100% 50%;transform:scaleX(0.9825);">441+1560</span>
<span class="t" id="t250" style="top:562.82px;font-size:12.40px;color:#1d1d1d;-webkit-text-stroke:0.18px #1d1d1d;right:1144.20px;transform-origin:100% 50%;">2001</span>
<span class="t" id="t251" style="top:562.82px;font-size:12.40px;color:#1d1d1d;-webkit-text-stroke:0.18px #1d1d1d;right:1103.00px;transform-origin:100% 50%;">2535</span>
<span class="t" id="t252" style="top:562.82px;font-size:12.40px;color:#1d1d1d;-webkit-text-stroke:0.18px #1d1d1d;right:1062.40px;transform-origin:100% 50%;">2217</span>
<span class="t" id="t253" style="top:562.82px;font-size:12.40px;color:#1d1d1d;-webkit-text-stroke:0.18px #1d1d1d;right:1029.40px;transform-origin:100% 50%;">0</span>
<span class="t" id="t254" style="top:562.22px;font-size:11.60px;color:#1d1d1d;-webkit-text-stroke:0.18px #1d1d1d;right:1000.60px;transform-origin:100% 50%;">81</span>
<span class="t" id="t255" style="top:562.82px;font-size:12.40px;color:#1d1d1d;-webkit-text-stroke:0.18px #1d1d1d;right:959.80px;transform-origin:100% 50%;">4536</span>
<span class="t" id="t256" style="top:562.82px;font-size:12.40px;color:#1d1d1d;-webkit-text-stroke:0.18px #1d1d1d;right:910.80px;transform-origin:100% 50%;">45,11</span>
<span class="t" id="t257" style="top:562.82px;font-size:12.40px;color:#1d1d1d;-webkit-text-stroke:0.18px #1d1d1d;right:877.80px;transform-origin:100% 50%;">141</span>
<span class="t" id="t258" style="top:562.82px;font-size:12.40px;color:#1d1d1d;-webkit-text-stroke:0.18px #1d1d1d;right:845.40px;transform-origin:100% 50%;">24</span>
<span class="t" id="t259" style="top:562.82px;font-size:12.40px;color:#1d1d1d;-webkit-text-stroke:0.18px #1d1d1d;right:795.60px;transform-origin:100% 50%;">5379</span>
<span class="t" id="t260" style="top:562.82px;font-size:12.40px;color:#1d1d1d;-webkit-text-stroke:0.18px #1d1d1d;right:755.40px;transform-origin:100% 50%;">0</span>
<span class="t" id="t261" style="top:562.82px;font-size:12.40px;color:#1d1d1d;-webkit-text-stroke:0.18px #1d1d1d;right:713.80px;transform-origin:100% 50%;">877</span>
<span class="t" id="t262" style="top:562.82px;font-size:12.40px;color:#1d1d1d;-webkit-text-stroke:0.18px #1d1d1d;right:664.00px;transform-origin:100% 50%;">1005</span>
<span class="t" id="t263" style="top:562.82px;font-size:12.40px;color:#1d1d1d;-webkit-text-stroke:0.18px #1d1d1d;right:615.00px;transform-origin:100% 50%;">990</span>
<span class="t" id="t264" style="top:562.22px;font-size:11.60px;color:#1d1d1d;-webkit-text-stroke:0.18px #1d1d1d;right:586.40px;transform-origin:100% 50%;">44</span>
<span class="t" id="t265" style="top:562.82px;font-size:12.40px;color:#1d1d1d;-webkit-text-stroke:0.18px #1d1d1d;right:538.00px;transform-origin:100% 50%;">1882</span>
<span class="t" id="t266" style="top:562.62px;font-size:10.80px;color:#1d1d1d;-webkit-text-stroke:0.18px #1d1d1d;right:463.50px;transform-origin:100% 50%;transform:scaleX(0.9897);">5 442 155,67</span>
<span class="t" id="t267" style="top:562.82px;font-size:12.40px;color:#1d1d1d;-webkit-text-stroke:0.18px #1d1d1d;right:385.20px;transform-origin:100% 50%;">87 388,70</span>
<span class="t" id="t268" style="top:563.12px;font-size:11.80px;color:#1d1d1d;-webkit-text-stroke:0.18px #1d1d1d;right:307.40px;transform-origin:100% 50%;">5 529 544,37</span>
<span class="t" id="t269" style="top:562.82px;font-size:12.40px;color:#1d1d1d;-webkit-text-stroke:0.18px #1d1d1d;right:239.60px;transform-origin:100% 50%;">1 199,77</span>
<span class="t" id="t270" style="top:581.82px;font-size:12.40px;color:#1d1d1d;-webkit-text-stroke:0.18px #1d1d1d;right:1226.00px;transform-origin:100% 50%;">10056</span>
<span class="t" id="t271" style="top:583.62px;font-size:8.80px;color:#1d1d1d;left:461.70px;transform-origin:0 50%;transform:scaleX(0.7003);">=</span>
<span class="t" id="t272" style="top:583.62px;font-size:8.80px;color:#1d1d1d;-webkit-text-stroke:0.18px #1d1d1d;right:1181.40px;transform-origin:100% 50%;transform:scaleX(0.9825);">441+1560</span>
<span class="t" id="t273" style="top:581.82px;font-size:12.40px;color:#1d1d1d;-webkit-text-stroke:0.18px #1d1d1d;right:1144.20px;transform-origin:100% 50%;">2001</span>
<span class="t" id="t274" style="top:581.82px;font-size:12.40px;color:#1d1d1d;-webkit-text-stroke:0.18px #1d1d1d;right:1103.00px;transform-origin:100% 50%;">2535</span>
<span class="t" id="t275" style="top:581.82px;font-size:12.40px;color:#1d1d1d;-webkit-text-stroke:0.18px #1d1d1d;right:1062.40px;transform-origin:100% 50%;">2217</span>
<span class="t" id="t276" style="top:581.82px;font-size:12.40px;color:#1d1d1d;-webkit-text-stroke:0.18px #1d1d1d;right:1029.40px;transform-origin:100% 50%;">0</span>
<span class="t" id="t277" style="top:581.22px;font-size:11.60px;color:#1d1d1d;-webkit-text-stroke:0.18px #1d1d1d;right:1000.60px;transform-origin:100% 50%;">81</span>
<span class="t" id="t278" style="top:581.82px;font-size:12.40px;color:#1d1d1d;-webkit-text-stroke:0.18px #1d1d1d;right:959.80px;transform-origin:100% 50%;">4536</span>
<span class="t" id="t279" style="top:581.82px;font-size:12.40px;color:#1d1d1d;-webkit-text-stroke:0.18px #1d1d1d;right:910.80px;transform-origin:100% 50%;">45,11</span>
<span class="t" id="t280" style="top:581.82px;font-size:12.40px;color:#1d1d1d;-webkit-text-stroke:0.18px #1d1d1d;right:877.80px;transform-origin:100% 50%;">141</span>
<span class="t" id="t281" style="top:581.82px;font-size:12.40px;color:#1d1d1d;-webkit-text-stroke:0.18px #1d1d1d;right:845.40px;transform-origin:100% 50%;">24</span>
<span class="t" id="t282" style="top:581.82px;font-size:12.40px;color:#1d1d1d;-webkit-text-stroke:0.18px #1d1d1d;right:795.60px;transform-origin:100% 50%;">5379</span>
<span class="t" id="t283" style="top:581.82px;font-size:12.40px;color:#1d1d1d;-webkit-text-stroke:0.18px #1d1d1d;right:755.40px;transform-origin:100% 50%;">0</span>
<span class="t" id="t284" style="top:581.82px;font-size:12.40px;color:#1d1d1d;-webkit-text-stroke:0.18px #1d1d1d;right:713.80px;transform-origin:100% 50%;">877</span>
<span class="t" id="t285" style="top:581.82px;font-size:12.40px;color:#1d1d1d;-webkit-text-stroke:0.18px #1d1d1d;right:664.00px;transform-origin:100% 50%;">1005</span>
<span class="t" id="t286" style="top:581.82px;font-size:12.40px;color:#1d1d1d;-webkit-text-stroke:0.18px #1d1d1d;right:615.00px;transform-origin:100% 50%;">990</span>
<span class="t" id="t287" style="top:581.22px;font-size:11.60px;color:#1d1d1d;-webkit-text-stroke:0.18px #1d1d1d;right:586.40px;transform-origin:100% 50%;">44</span>
<span class="t" id="t288" style="top:581.82px;font-size:12.40px;color:#1d1d1d;-webkit-text-stroke:0.18px #1d1d1d;right:538.00px;transform-origin:100% 50%;">1882</span>
<span class="t" id="t289" style="top:581.62px;font-size:10.80px;color:#1d1d1d;-webkit-text-stroke:0.18px #1d1d1d;right:463.50px;transform-origin:100% 50%;transform:scaleX(0.9897);">5 442 155,67</span>
<span class="t" id="t290" style="top:581.82px;font-size:12.40px;color:#1d1d1d;-webkit-text-stroke:0.18px #1d1d1d;right:385.20px;transform-origin:100% 50%;">87 388,70</span>
<span class="t" id="t291" style="top:582.12px;font-size:11.80px;color:#1d1d1d;-webkit-text-stroke:0.18px #1d1d1d;right:307.40px;transform-origin:100% 50%;">5 529 544,37</span>
<span class="t" id="t292" style="top:581.82px;font-size:12.40px;color:#1d1d1d;-webkit-text-stroke:0.18px #1d1d1d;right:239.60px;transform-origin:100% 50%;">1 199,77</span>
</body></html>
